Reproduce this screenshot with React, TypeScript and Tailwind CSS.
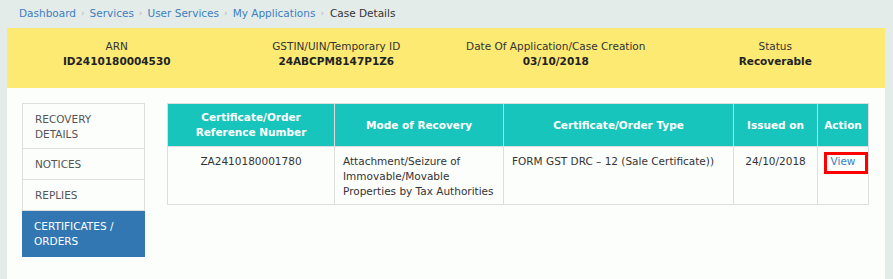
import React from "react"

const crumbs = ["Dashboard", "Services", "User Services", "My Applications"]

const facts = [
  { label: "ARN", value: "ID2410180004530" },
  { label: "GSTIN/UIN/Temporary ID", value: "24ABCPM8147P1Z6" },
  { label: "Date Of Application/Case Creation", value: "03/10/2018" },
  { label: "Status", value: "Recoverable" },
]

const tabs = [
  { label: ["RECOVERY", "DETAILS"], active: false },
  { label: ["NOTICES"], active: false },
  { label: ["REPLIES"], active: false },
  { label: ["CERTIFICATES /", "ORDERS"], active: true },
]

export default function App() {
  return (
    <div
      className="w-[893px] h-[279px] overflow-hidden bg-[#e4ecea] text-[10.5px] leading-[15px] text-[#333]"
      style={{ fontFamily: '"DejaVu Sans", Verdana, sans-serif' }}
    >
      {/* breadcrumb */}
      <div className="h-[28px] flex items-center pl-[19px] pb-[1px]">
        {crumbs.map((c) => (
          <React.Fragment key={c}>
            <span className="text-[#3d7ec0]">{c}</span>
            <span className="text-[#b5b5b5] text-[9px] mx-[5px]">›</span>
          </React.Fragment>
        ))}
        <span className="text-[#333] ml-[1px]">Case Details</span>
      </div>

      <div className="ml-[7px] w-[878px]">
        {/* summary banner */}
        <div className="h-[60px] bg-[#fcea73] grid grid-cols-4 pt-[11px]">
          {facts.map((f) => (
            <div key={f.label} className="text-center">
              <div className="text-[#333]">{f.label}</div>
              <div className="font-bold text-[#222]">{f.value}</div>
            </div>
          ))}
        </div>

        {/* content panel */}
        <div className="h-[191px] bg-[#fcfefc] flex gap-[22px] pl-[15px] pt-[15px]">
          <div className="w-[123px] self-start border border-[#ddd] border-b-0">
            {tabs.map((t, i) => (
              <div
                key={i}
                className={
                  t.active
                    ? "bg-[#3277b2] text-white px-[12px] pt-[8px] pb-[8px] -mx-px w-[123px]"
                    : i === 0
                      ? "text-[#555] px-[12px] pt-[8px] pb-[6px] border-b border-[#ddd]"
                      : "text-[#555] px-[12px] pt-[8px] pb-[7px] border-b border-[#ddd]"
                }
              >
                {t.label.map((l) => (
                  <div key={l}>{l}</div>
                ))}
              </div>
            ))}
          </div>

          <div className="relative">
            <table className="border-collapse w-[701px] table-fixed">
              <colgroup>
                <col className="w-[167px]" />
                <col className="w-[169px]" />
                <col className="w-[230px]" />
                <col className="w-[84px]" />
                <col className="w-[51px]" />
              </colgroup>
              <thead>
                <tr className="bg-[#17c5bc] text-white font-bold h-[43px]">
                  <th className="border border-[#ddd] px-[6px] font-bold">
                    Certificate/Order
                    <br />
                    Reference Number
                  </th>
                  <th className="border border-[#ddd] px-[6px] font-bold">Mode of Recovery</th>
                  <th className="border border-[#ddd] px-[6px] font-bold">Certificate/Order Type</th>
                  <th className="border border-[#ddd] px-[6px] font-bold">Issued on</th>
                  <th className="border border-[#ddd] px-[4px] font-bold">Action</th>
                </tr>
              </thead>
              <tbody>
                <tr className="h-[58px] align-top">
                  <td className="border border-[#ddd] px-[8px] pt-[7px] text-center">ZA2410180001780</td>
                  <td className="border border-[#ddd] px-[8px] pt-[7px]">
                    Attachment/Seizure of Immovable/Movable Properties by Tax Authorities
                  </td>
                  <td className="border border-[#ddd] px-[8px] pt-[7px]">
                    FORM GST DRC – 12 (Sale Certificate))
                  </td>
                  <td className="border border-[#ddd] px-[4px] pt-[7px] text-center">24/10/2018</td>
                  <td className="border border-[#ddd] px-[2px] pt-[7px] text-center">
                    <span className="text-[#3d7ec0]">View</span>
                  </td>
                </tr>
              </tbody>
            </table>
            {/* highlight annotation */}
            <div className="absolute left-[657px] top-[49px] w-[44px] h-[22px] border-[3px] border-[#f00]" />
          </div>
        </div>
      </div>
    </div>
  )
}
